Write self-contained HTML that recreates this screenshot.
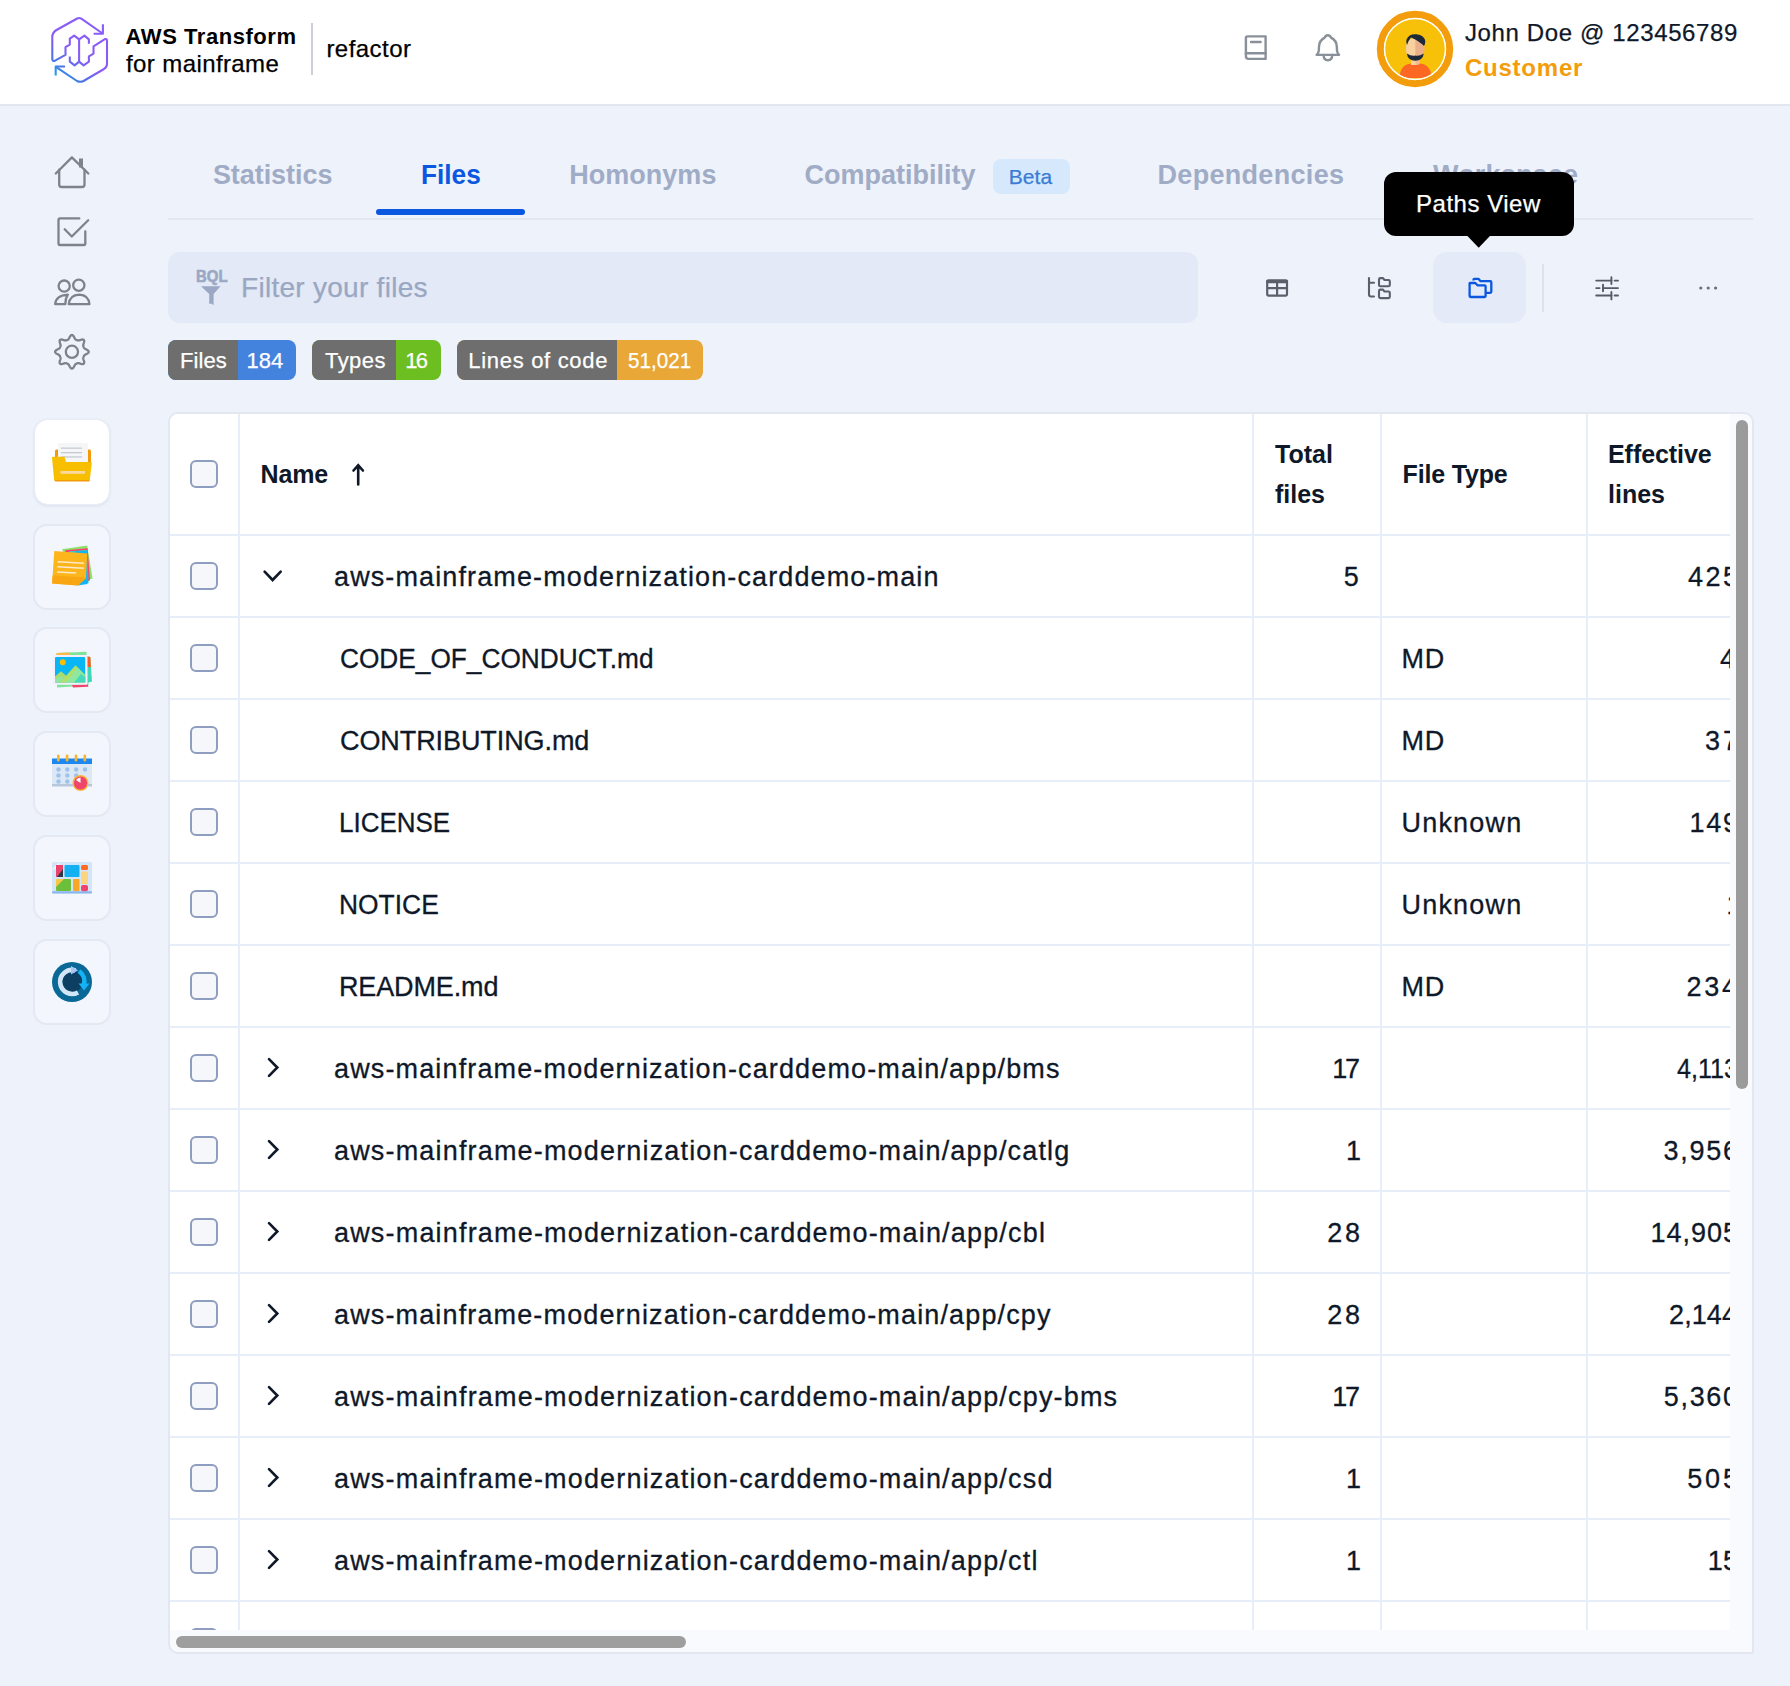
<!DOCTYPE html>
<html><head><meta charset="utf-8"><title>AWS Transform - Files</title>
<style>
html,body{margin:0;padding:0}
body{width:1790px;height:1686px;overflow:hidden;background:#eef2fb;font-family:"Liberation Sans",sans-serif;position:relative}
.a{position:absolute}
.t{position:absolute;white-space:pre}
svg{position:absolute;overflow:visible}
.card{position:absolute;left:32.5px;width:78.5px;height:86px;border-radius:14px;box-sizing:border-box;background:#f3f6fc;border:2px solid #e3e8f3}
.cb{position:absolute;left:190px;width:28px;height:28px;box-sizing:border-box;border:2px solid #8e9dc0;border-radius:6px;background:#f5f7fa}
.hl{position:absolute;left:0;width:1560px;height:2px;background:#e8eef9}
.vl{position:absolute;top:0;width:2px;height:1216px;background:#e8eef9}
</style></head><body>

<div class="a" style="left:0;top:0;width:1790px;height:104px;background:#fff"></div>
<div class="a" style="left:0;top:104px;width:1790px;height:2px;background:#e1e6f0"></div>
<svg style="left:0;top:0" width="120" height="100" viewBox="0 0 120 100">
<defs><linearGradient id="lg" x1="100" y1="20" x2="55" y2="80" gradientUnits="userSpaceOnUse">
<stop offset="0" stop-color="#8a5cf6"/><stop offset="0.55" stop-color="#8a5cf6"/><stop offset="0.8" stop-color="#4a74e6"/><stop offset="1" stop-color="#07b6f2"/></linearGradient></defs>
<g fill="none" stroke="url(#lg)" stroke-width="2.1" stroke-linejoin="round" stroke-linecap="butt">
<path d="M102.9 24.2 V33.7 H93.6"/>
<path d="M102.6 33.5 L81.3 18.6 Q79.3 17.4 77.2 18.5 L56.5 30 Q52.3 32.6 52.3 37 V59.2 Q52.6 61.6 55 60.7 L65.5 54.8 V47.2 L69.8 44.6 V38.6 L74.2 35.6 L79.1 39.4 L84.4 35.6 L88.9 39.4 V43.8"/>
<path d="M79.1 39.4 V61.6"/>
<path d="M69.8 56.6 V61.6 L74.6 65.4 L79.1 61.6 L83.6 65.4 L88.9 61.6 V56.4 L93.5 53.6 V46.4 L104.5 39.3 Q107 38.2 107 41 V64 Q107 67 104 69 L83.5 81 Q80 82.6 77 81 L56.6 67.4"/>
<path d="M65 66.5 H55.7 V75.5"/>
</g></svg>
<div class="a" style="left:310.5px;top:23px;width:2.4px;height:52px;background:#cdd0d6"></div>
<svg style="left:0;top:0" width="1790" height="1686"><g fill="none" stroke="#8a9099" stroke-width="2.4" stroke-linejoin="round" stroke-linecap="round">
<path d="M1247.5 36.4 H1265.6 V58.9 H1248.5 Q1245.9 58.9 1245.9 56.3 V38 Q1245.9 36.4 1247.5 36.4 Z"/>
<path d="M1245.9 53.2 H1265.6"/><path d="M1251 42 H1260.6"/></g></svg>
<svg style="left:0;top:0" width="1790" height="1686"><g fill="none" stroke="#8a9099" stroke-width="2.4" stroke-linejoin="round" stroke-linecap="round">
<path d="M1327.8 35.3 Q1330 35.3 1331 37.6 Q1336.6 40.4 1336.8 46.5 L1337 50.5 Q1337.2 53 1339 54.9 H1316.7 Q1318.7 53 1318.8 50.5 L1319 46.5 Q1319.3 40.4 1324.7 37.6 Q1325.7 35.3 1327.8 35.3 Z"/>
<path d="M1323.6 55 Q1323.6 60.2 1327.9 60.2 Q1332.2 60.2 1332.2 55"/></g></svg>
<svg style="left:0;top:0" width="1790" height="1686">
<defs><clipPath id="avc"><circle cx="1415" cy="49" r="29.8"/></clipPath></defs>
<circle cx="1415" cy="49" r="34.6" fill="none" stroke="#f39c0c" stroke-width="7.2"/>
<circle cx="1415" cy="49" r="31.2" fill="#fff"/>
<circle cx="1415" cy="49" r="29.8" fill="#f7c10a"/>
<g clip-path="url(#avc)">
<path d="M1399.5 78 Q1400 64.5 1411 63.5 H1420 Q1431 64.5 1431.5 78 Z" fill="#fd6724"/>
<rect x="1411" y="56" width="9" height="9" rx="3" fill="#f5b98f"/>
<rect x="1411" y="56" width="4.5" height="9" fill="#f9d19e"/>
<ellipse cx="1415.3" cy="48.5" rx="9.4" ry="10.5" fill="#eab08a"/>
<path d="M1415.3 38 Q1406 38 1405.9 48.5 Q1406 59 1415.3 59 Z" fill="#f9d19e"/>
<path d="M1406.5 39.5 Q1409 33.5 1416.5 34.2 Q1424.5 35 1425.3 41.5 Q1425.2 44.5 1424 46 Q1419 41 1411 37.5 Q1408 41 1407 45 Q1405.8 42 1406.5 39.5 Z" fill="#1d2838"/>
<path d="M1406.8 53.5 Q1407.8 60.5 1415.3 60.8 Q1422.8 60.5 1423.8 53.5 Q1419 56.5 1415.3 55.5 Q1411.6 56.5 1406.8 53.5 Z" fill="#1d2838"/>
</g></svg>
<svg style="left:0;top:0" width="1790" height="1686"><g fill="none" stroke="#7d828c" stroke-width="2.3" stroke-linejoin="round" stroke-linecap="round">
<path d="M55.8 173.5 L71.9 157.4 L88.3 173.5"/>
<path d="M59.2 169.7 V184.5 Q59.2 187 61.7 187 H82 Q84.5 187 84.5 184.5 V169.7"/>
</g><rect x="79" y="158.5" width="4" height="9" fill="#7d828c"/>
<g fill="none" stroke="#7d828c" stroke-width="2.3" stroke-linejoin="round" stroke-linecap="round">
<path d="M79.3 218.4 H60 Q58.5 218.4 58.5 220 V243.6 Q58.5 245 60 245 H84 Q85.3 245 85.3 243.6 V231.3"/>
<path d="M64.7 229.3 L71.8 236.5 L88.2 220.2"/>
<circle cx="64.2" cy="286.1" r="5.6"/><circle cx="78.8" cy="285.2" r="5.6"/>
<path d="M55.2 304.2 Q55.6 295.5 67.8 294.6 Q65.3 298.5 65.3 304.2 Z"/>
<path d="M68.8 304.2 Q69.6 295 79.3 294.6 Q88.6 295 89.4 304.2 Z"/>
<circle cx="71.9" cy="351.8" r="6.1"/>
</g>
<path id="gear" fill="none" stroke="#7d828c" stroke-width="2.3" stroke-linejoin="round" d="M71.90 335.00 L72.23 335.05 L72.55 335.18 L72.87 335.40 L73.17 335.69 L73.45 336.04 L73.72 336.44 L73.97 336.86 L74.20 337.29 L74.42 337.71 L74.62 338.11 L74.82 338.47 L75.02 338.80 L75.22 339.08 L75.42 339.31 L75.63 339.50 L75.85 339.65 L76.07 339.77 L76.30 339.88 L76.53 339.97 L76.76 340.07 L76.99 340.16 L77.22 340.26 L77.46 340.35 L77.70 340.42 L77.96 340.46 L78.24 340.48 L78.55 340.45 L78.89 340.40 L79.26 340.31 L79.66 340.19 L80.09 340.06 L80.54 339.91 L81.00 339.77 L81.48 339.65 L81.94 339.56 L82.39 339.51 L82.81 339.52 L83.19 339.59 L83.51 339.72 L83.78 339.92 L83.98 340.19 L84.11 340.51 L84.18 340.89 L84.19 341.31 L84.14 341.76 L84.05 342.22 L83.93 342.70 L83.79 343.16 L83.64 343.61 L83.51 344.04 L83.39 344.44 L83.30 344.81 L83.25 345.15 L83.22 345.46 L83.24 345.74 L83.28 346.00 L83.35 346.24 L83.44 346.48 L83.54 346.71 L83.63 346.94 L83.73 347.17 L83.82 347.40 L83.93 347.63 L84.05 347.85 L84.20 348.07 L84.39 348.28 L84.62 348.48 L84.90 348.68 L85.23 348.88 L85.59 349.08 L85.99 349.28 L86.41 349.50 L86.84 349.73 L87.26 349.98 L87.66 350.25 L88.01 350.53 L88.30 350.83 L88.52 351.15 L88.65 351.47 L88.70 351.80 L88.65 352.13 L88.52 352.45 L88.30 352.77 L88.01 353.07 L87.66 353.35 L87.26 353.62 L86.84 353.87 L86.41 354.10 L85.99 354.32 L85.59 354.52 L85.23 354.72 L84.90 354.92 L84.62 355.12 L84.39 355.32 L84.20 355.53 L84.05 355.75 L83.93 355.97 L83.82 356.20 L83.73 356.43 L83.63 356.66 L83.54 356.89 L83.44 357.12 L83.35 357.36 L83.28 357.60 L83.24 357.86 L83.22 358.14 L83.25 358.45 L83.30 358.79 L83.39 359.16 L83.51 359.56 L83.64 359.99 L83.79 360.44 L83.93 360.90 L84.05 361.38 L84.14 361.84 L84.19 362.29 L84.18 362.71 L84.11 363.09 L83.98 363.41 L83.78 363.68 L83.51 363.88 L83.19 364.01 L82.81 364.08 L82.39 364.09 L81.94 364.04 L81.48 363.95 L81.00 363.83 L80.54 363.69 L80.09 363.54 L79.66 363.41 L79.26 363.29 L78.89 363.20 L78.55 363.15 L78.24 363.12 L77.96 363.14 L77.70 363.18 L77.46 363.25 L77.22 363.34 L76.99 363.44 L76.76 363.53 L76.53 363.63 L76.30 363.72 L76.07 363.83 L75.85 363.95 L75.63 364.10 L75.42 364.29 L75.22 364.52 L75.02 364.80 L74.82 365.13 L74.62 365.49 L74.42 365.89 L74.20 366.31 L73.97 366.74 L73.72 367.16 L73.45 367.56 L73.17 367.91 L72.87 368.20 L72.55 368.42 L72.23 368.55 L71.90 368.60 L71.57 368.55 L71.25 368.42 L70.93 368.20 L70.63 367.91 L70.35 367.56 L70.08 367.16 L69.83 366.74 L69.60 366.31 L69.38 365.89 L69.18 365.49 L68.98 365.13 L68.78 364.80 L68.58 364.52 L68.38 364.29 L68.17 364.10 L67.95 363.95 L67.73 363.83 L67.50 363.72 L67.27 363.63 L67.04 363.53 L66.81 363.44 L66.58 363.34 L66.34 363.25 L66.10 363.18 L65.84 363.14 L65.56 363.12 L65.25 363.15 L64.91 363.20 L64.54 363.29 L64.14 363.41 L63.71 363.54 L63.26 363.69 L62.80 363.83 L62.32 363.95 L61.86 364.04 L61.41 364.09 L60.99 364.08 L60.61 364.01 L60.29 363.88 L60.02 363.68 L59.82 363.41 L59.69 363.09 L59.62 362.71 L59.61 362.29 L59.66 361.84 L59.75 361.38 L59.87 360.90 L60.01 360.44 L60.16 359.99 L60.29 359.56 L60.41 359.16 L60.50 358.79 L60.55 358.45 L60.58 358.14 L60.56 357.86 L60.52 357.60 L60.45 357.36 L60.36 357.12 L60.26 356.89 L60.17 356.66 L60.07 356.43 L59.98 356.20 L59.87 355.97 L59.75 355.75 L59.60 355.53 L59.41 355.32 L59.18 355.12 L58.90 354.92 L58.57 354.72 L58.21 354.52 L57.81 354.32 L57.39 354.10 L56.96 353.87 L56.54 353.62 L56.14 353.35 L55.79 353.07 L55.50 352.77 L55.28 352.45 L55.15 352.13 L55.10 351.80 L55.15 351.47 L55.28 351.15 L55.50 350.83 L55.79 350.53 L56.14 350.25 L56.54 349.98 L56.96 349.73 L57.39 349.50 L57.81 349.28 L58.21 349.08 L58.57 348.88 L58.90 348.68 L59.18 348.48 L59.41 348.28 L59.60 348.07 L59.75 347.85 L59.87 347.63 L59.98 347.40 L60.07 347.17 L60.17 346.94 L60.26 346.71 L60.36 346.48 L60.45 346.24 L60.52 346.00 L60.56 345.74 L60.58 345.46 L60.55 345.15 L60.50 344.81 L60.41 344.44 L60.29 344.04 L60.16 343.61 L60.01 343.16 L59.87 342.70 L59.75 342.22 L59.66 341.76 L59.61 341.31 L59.62 340.89 L59.69 340.51 L59.82 340.19 L60.02 339.92 L60.29 339.72 L60.61 339.59 L60.99 339.52 L61.41 339.51 L61.86 339.56 L62.32 339.65 L62.80 339.77 L63.26 339.91 L63.71 340.06 L64.14 340.19 L64.54 340.31 L64.91 340.40 L65.25 340.45 L65.56 340.48 L65.84 340.46 L66.10 340.42 L66.34 340.35 L66.58 340.26 L66.81 340.16 L67.04 340.07 L67.27 339.97 L67.50 339.88 L67.73 339.77 L67.95 339.65 L68.17 339.50 L68.38 339.31 L68.58 339.08 L68.78 338.80 L68.98 338.47 L69.18 338.11 L69.38 337.71 L69.60 337.29 L69.83 336.86 L70.08 336.44 L70.35 336.04 L70.63 335.69 L70.93 335.40 L71.25 335.18 L71.57 335.05 L71.90 335.00 Z"/>
</svg>
<div class="card" style="left:34px;top:419px;width:76px;height:86px;background:#fff;border:1px solid #e8ecf4;box-shadow:0 1px 3px rgba(170,182,210,0.3)"></div>
<div class="card" style="top:523.5px"></div>
<div class="card" style="top:627px"></div>
<div class="card" style="top:731px"></div>
<div class="card" style="top:835px"></div>
<div class="card" style="top:939px"></div>
<svg style="left:0;top:0" width="1790" height="1686">
<!-- folder -->
<rect x="55" y="449.5" width="36" height="20" rx="1.5" fill="#f49a0a"/>
<rect x="58" y="443" width="30" height="30" fill="#f4f6f8"/>
<rect x="61" y="447.5" width="21" height="1.3" fill="#c6cbd2"/><rect x="61" y="452" width="21" height="1.3" fill="#c6cbd2"/><rect x="61" y="456.3" width="21" height="1.3" fill="#c6cbd2"/>
<path d="M52 457.5 Q52 456.8 52.8 456.8 H64.5 L66 462 H91 Q92 462 91.8 463 L89.8 480 Q89.6 481 88.6 481 H55.2 Q54.2 481 54.1 480 Z" fill="#f7bf00"/>
<rect x="60.5" y="471" width="24.5" height="2.8" fill="#f9d9a0"/>
<rect x="55" y="480" width="34.5" height="1.5" fill="#f39a0a"/>
<!-- sticky notes -->
<path d="M62 549.2 L87.2 545.5 L92.5 578.5 L80 583 Z" fill="#8de06a"/>
<path d="M65 550.3 L87.6 548.2 L90 580.5 L78 583.5 Z" fill="#ff3d6e"/>
<path d="M69 551.3 L87 550 L88.6 583.2 L75 584.3 Z" fill="#2fd0c4"/>
<path d="M75 551.3 L87 550.8 L88 583.2 L76 584.2 Z" fill="#11b5f5"/>
<path d="M54.3 551 L87.3 553.5 L85.9 578.8 L78.1 585.5 L52.1 583.4 Z" fill="#fdb51c"/>
<path d="M52.6 575.5 L86.2 577.4 L85.9 578.8 L78.1 585.5 L52.1 583.4 Z" fill="#f9a613"/>
<path d="M85.9 578.8 L78.1 585.5 L87.3 584 Z" fill="#11b5f5"/>
<g fill="#fde9cc"><path d="M57.5 561 L84 562.5 V564 L57.5 562.6 Z"/><path d="M57.3 566 L83.8 567.5 V569 L57.3 567.6 Z"/><path d="M57.2 571.2 L76.2 572.3 V573.8 L57.2 572.8 Z"/></g>
<!-- images -->
<path d="M56.5 653 L86.5 651.8 L88.5 685.5 L57 687.6 Z" fill="#80e39a"/>
<path d="M56.5 653 L70 652.5 L70 655 L56.5 655.5 Z" fill="#ffb84a"/>
<path d="M85 656 L90.3 657 L92 681.5 L86 683.2 Z" fill="#3fd7b6"/>
<path d="M85 656 L90.3 657 L90.9 667 L85.6 667 Z" fill="#ff5a1f"/>
<path d="M72 685 L87.6 684 L88.4 686.8 L73 687.4 Z" fill="#f2456c"/>
<rect x="52.5" y="655" width="35" height="29.7" rx="0.8" fill="#f4effd"/>
<rect x="55" y="656.9" width="30.2" height="25.6" rx="1.2" fill="#08b6f5"/>
<circle cx="62.8" cy="662.3" r="3" fill="#fbbd08"/>
<path d="M55 676.5 L61 671.3 L66.5 676 L61 682.5 H55 Z" fill="#a9dc6c"/>
<path d="M55 679.5 L60 676 L64 679 L62 682.5 H55 Z" fill="#8fe6a2"/>
<path d="M60 682.5 L75.5 665.2 L85.2 675 V682.5 Z" fill="#b2de6a"/>
<path d="M66 682.5 L77.5 667.5 L85.2 675.5 V682.5 Z" fill="#8fe8a0"/>
<path d="M74 682.5 L81 674 L85.2 677 V682.5 Z" fill="#48d9bd"/>
<!-- calendar -->
<rect x="52" y="758.5" width="40" height="5.5" fill="#1d88f0"/>
<rect x="52" y="764" width="40" height="22" fill="#dde8f6"/>
<rect x="52" y="784" width="40" height="2.5" fill="#b8c8dc"/>
<g fill="#9ec3ea">
<circle cx="58.5" cy="769.5" r="2.2"/><circle cx="67.3" cy="769.5" r="2.2"/><circle cx="76.2" cy="769.5" r="2.2"/><circle cx="85" cy="769.5" r="2.2"/>
<circle cx="58.5" cy="775.5" r="2.2"/><circle cx="67.3" cy="775.5" r="2.2"/><circle cx="76.2" cy="775.5" r="2.2"/>
<circle cx="58.5" cy="781.5" r="2.2"/><circle cx="67.3" cy="781.5" r="2.2"/></g>
<g fill="#f7b52b"><rect x="57" y="754.5" width="2.6" height="7" rx="1.2"/><rect x="65.8" y="754.5" width="2.6" height="7" rx="1.2"/><rect x="74.7" y="754.5" width="2.6" height="7" rx="1.2"/><rect x="83.5" y="754.5" width="2.6" height="7" rx="1.2"/></g>
<circle cx="80.5" cy="783" r="8" fill="#f9b73a"/><circle cx="80.5" cy="783" r="6.6" fill="#f0456a"/>
<path d="M80.5 783 V777.5 A5.5 5.5 0 0 0 76 780 Z" fill="#fff"/>
<!-- dashboard -->
<rect x="52" y="862" width="40" height="31.6" rx="1.8" fill="#d3e5f8"/>
<rect x="52" y="891.2" width="40" height="2.4" rx="1" fill="#8ab7ec"/>
<path d="M52 869.5 L59.5 862 V869.5 Z" fill="#eef5fd"/>
<rect x="56" y="865" width="7" height="12" fill="#e9436a"/>
<path d="M63 869 V877 H57 Z" fill="#2f3646"/>
<rect x="64.5" y="865" width="15" height="12" rx="1" fill="#15b0f2"/>
<rect x="81" y="865" width="7" height="5" rx="1.5" fill="#ff6b22"/>
<rect x="81" y="871.5" width="7" height="12.5" rx="1.2" fill="#fcd67f"/>
<rect x="81" y="885" width="7" height="6.2" rx="1.8" fill="#f0456a"/>
<rect x="56" y="879" width="15" height="12" rx="1.2" fill="#6cbf3a"/>
<path d="M56 879 H64 L56 887 Z" fill="#f6c84a"/>
<rect x="73" y="879" width="6.5" height="12" rx="1" fill="#f9a826"/>
<!-- refresh -->
<circle cx="72" cy="982" r="20" fill="#0a6896"/>
<circle cx="72.5" cy="981.5" r="10.5" fill="#0c3f62"/>
<path d="M75.5 970.4 A12 12 0 1 0 78 992.4" fill="none" stroke="#d3e6f8" stroke-width="4.6"/>
<path d="M71 966 L78 970.3 L71 974.6 Z" fill="#a9c6f5"/>
<path d="M79 971.2 A12 12 0 0 1 83.8 984.5" fill="none" stroke="#12b4f5" stroke-width="4.6"/>
<path d="M78.5 983.5 L89.5 983.5 L84 990.5 Z" fill="#12b4f5"/>
</svg>
<div class="a" style="left:168px;top:217.5px;width:1585px;height:2px;background:#e2e6ee"></div>
<div class="a" style="left:375.7px;top:209px;width:149.5px;height:6px;border-radius:3px;background:#0b57e0"></div>
<div class="a" style="left:993px;top:158.7px;width:77px;height:35px;border-radius:8px;background:#d6e9fc"></div>
<div class="a" style="left:168px;top:252px;width:1030px;height:71px;border-radius:12px;background:#e3e9f6"></div>
<svg style="left:0;top:0" width="1790" height="1686"><path d="M201 286.3 H220.5 L213.6 294 V305.2 L211.6 303.8 L209.2 303.8 V294 Z" fill="#9aa8c4"/></svg>
<div class="a" style="left:1433px;top:251.6px;width:93px;height:71.4px;border-radius:14px;background:#e4eaf7"></div>
<div class="a" style="left:1542px;top:264px;width:2px;height:47.5px;background:#dce2ee"></div>
<svg style="left:0;top:0" width="1790" height="1686">
<g fill="none" stroke="#5a5f6b" stroke-width="2.2" stroke-linejoin="round">
<rect x="1267.2" y="280.5" width="19.8" height="15.2" rx="1.6"/>
<path d="M1267.2 288.2 H1287 M1277.1 283 V295.7"/>
</g><rect x="1266.1" y="279.4" width="22" height="3.8" rx="1.5" fill="#5a5f6b"/>
<g fill="none" stroke="#5a5f6b" stroke-width="2.1" stroke-linejoin="round" stroke-linecap="round">
<path d="M1369 278 V294.6 Q1369 296.5 1371 296.5 H1374"/><path d="M1369 282.8 H1374"/>
<path d="M1379 279.5 Q1379 278.1 1380.4 278.1 H1383 L1384.5 280 H1388.5 Q1389.8 280 1389.8 281.3 V285 Q1389.8 286.3 1388.5 286.3 H1380.4 Q1379 286.3 1379 285 Z"/>
<path d="M1379 291 Q1379 289.6 1380.4 289.6 H1383 L1384.5 291.5 H1388.5 Q1389.8 291.5 1389.8 292.8 V296.8 Q1389.8 298.1 1388.5 298.1 H1380.4 Q1379 298.1 1379 296.8 Z"/>
</g>
<g fill="none" stroke="#0b57e0" stroke-width="2.3" stroke-linejoin="round">
<path d="M1469.6 283.2 V296 Q1469.6 297 1470.6 297 H1484.6 Q1485.6 297 1485.6 296 V286.3 Q1485.6 285.3 1484.6 285.3 H1477.5 L1475.3 283 H1470.6 Q1469.6 283 1469.6 283.2 Z"/>
<path d="M1473.5 280.6 V279.8 Q1473.5 278.9 1474.4 278.9 H1478.6 L1480.6 281.2 H1490.3 Q1491.3 281.2 1491.3 282.2 V291.8 Q1491.3 292.8 1490.3 292.8 H1485.6"/>
</g>
<g stroke="#545a66" stroke-width="1.9" stroke-linecap="round">
<path d="M1596.2 280.6 H1611.4 M1614.6 280.6 H1618 M1596.2 288.1 H1599.6 M1603 288.1 H1618 M1596.2 295.5 H1611.4 M1614.6 295.5 H1618"/>
<path d="M1611.4 277.3 V284 M1603 284.6 V291.3 M1611.4 292 V299.4"/>
</g>
</svg>
<svg style="left:0;top:0" width="1790" height="1686"><g fill="#6a6f7a"><circle cx="1700.8" cy="288" r="1.6"/><circle cx="1708.2" cy="288" r="1.6"/><circle cx="1715.6" cy="288" r="1.6"/></g></svg>
<div class="a" style="left:167.8px;top:340px;width:128.0px;height:40px;border-radius:8px;overflow:hidden;background:#4382dd"><div class="a" style="left:0;top:0;width:70.29999999999998px;height:40px;background:#6e6e6e"></div></div>
<div class="a" style="left:312px;top:340px;width:129.10000000000002px;height:40px;border-radius:8px;overflow:hidden;background:#6dbe21"><div class="a" style="left:0;top:0;width:84px;height:40px;background:#6e6e6e"></div></div>
<div class="a" style="left:456.8px;top:340px;width:246.3px;height:40px;border-radius:8px;overflow:hidden;background:#e8a736"><div class="a" style="left:0;top:0;width:160.2px;height:40px;background:#6e6e6e"></div></div>
<div class="a" style="left:168px;top:412px;width:1586px;height:1242px;box-sizing:border-box;border:2px solid #e2e7f0;border-radius:10px 10px 2px 10px;background:#f9fafd"></div>
<div class="a" style="left:170px;top:414px;width:1560px;height:1216px;overflow:hidden;background:#fff;border-top-left-radius:8px">
<div class="hl" style="top:120px"></div>
<div class="hl" style="top:202px"></div>
<div class="hl" style="top:284px"></div>
<div class="hl" style="top:366px"></div>
<div class="hl" style="top:448px"></div>
<div class="hl" style="top:530px"></div>
<div class="hl" style="top:612px"></div>
<div class="hl" style="top:694px"></div>
<div class="hl" style="top:776px"></div>
<div class="hl" style="top:858px"></div>
<div class="hl" style="top:940px"></div>
<div class="hl" style="top:1022px"></div>
<div class="hl" style="top:1104px"></div>
<div class="hl" style="top:1186px"></div>
<div class="vl" style="left:68px"></div>
<div class="vl" style="left:1082px"></div>
<div class="vl" style="left:1210px"></div>
<div class="vl" style="left:1416px"></div>
<div class="a" style="left:1390px;top:121px;width:170px;height:1100px">
<div class="t" style="left:128px;top:29px;font-size:27px;line-height:27px;color:#0f1828;letter-spacing:2.48px;-webkit-text-stroke:0.3px #0f1828;">425</div>
<div class="t" style="left:160px;top:111px;font-size:27px;line-height:27px;color:#0f1828;letter-spacing:0px;-webkit-text-stroke:0.3px #0f1828;">4</div>
<div class="t" style="left:145px;top:193px;font-size:27px;line-height:27px;color:#0f1828;letter-spacing:2.98px;-webkit-text-stroke:0.3px #0f1828;">37</div>
<div class="t" style="left:129.4px;top:275px;font-size:27px;line-height:27px;color:#0f1828;letter-spacing:1.78px;-webkit-text-stroke:0.3px #0f1828;">149</div>
<div class="t" style="left:166.6px;top:357px;font-size:27px;line-height:27px;color:#0f1828;letter-spacing:0px;-webkit-text-stroke:0.3px #0f1828;">1</div>
<div class="t" style="left:126.5px;top:439px;font-size:27px;line-height:27px;color:#0f1828;letter-spacing:2.73px;-webkit-text-stroke:0.3px #0f1828;">234</div>
<div class="t" style="left:117px;top:521px;font-size:27px;line-height:27px;color:#0f1828;letter-spacing:0px;-webkit-text-stroke:0.3px #0f1828;transform:scaleX(0.9296);transform-origin:0 0;">4,113</div>
<div class="t" style="left:103.5px;top:603px;font-size:27px;line-height:27px;color:#0f1828;letter-spacing:1.74px;-webkit-text-stroke:0.3px #0f1828;">3,956</div>
<div class="t" style="left:90.4px;top:685px;font-size:27px;line-height:27px;color:#0f1828;letter-spacing:1.01px;-webkit-text-stroke:0.3px #0f1828;">14,905</div>
<div class="t" style="left:109px;top:767px;font-size:27px;line-height:27px;color:#0f1828;letter-spacing:0.11px;-webkit-text-stroke:0.3px #0f1828;">2,144</div>
<div class="t" style="left:103.8px;top:849px;font-size:27px;line-height:27px;color:#0f1828;letter-spacing:1.66px;-webkit-text-stroke:0.3px #0f1828;">5,360</div>
<div class="t" style="left:127.2px;top:931px;font-size:27px;line-height:27px;color:#0f1828;letter-spacing:2.88px;-webkit-text-stroke:0.3px #0f1828;">505</div>
<div class="t" style="left:147.8px;top:1013px;font-size:27px;line-height:27px;color:#0f1828;letter-spacing:0.18px;-webkit-text-stroke:0.3px #0f1828;">15</div>
</div>
</div>
<div class="cb" style="top:460px"></div>
<div class="cb" style="top:562px"></div>
<div class="cb" style="top:644px"></div>
<div class="cb" style="top:726px"></div>
<div class="cb" style="top:808px"></div>
<div class="cb" style="top:890px"></div>
<div class="cb" style="top:972px"></div>
<div class="cb" style="top:1054px"></div>
<div class="cb" style="top:1136px"></div>
<div class="cb" style="top:1218px"></div>
<div class="cb" style="top:1300px"></div>
<div class="cb" style="top:1382px"></div>
<div class="cb" style="top:1464px"></div>
<div class="cb" style="top:1546px"></div>
<div class="a" style="left:190px;top:1628px;width:28px;height:2px;overflow:hidden"><div class="cb" style="left:0;top:0"></div></div>
<svg style="left:0;top:0" width="1790" height="1686"><g fill="none" stroke="#0f1828" stroke-width="2.6" stroke-linecap="round" stroke-linejoin="miter"><path d="M264.6 571.6 L272.6 580 L280.7 571.6"/><path d="M269 1059.2 L277.3 1067.5 L269 1075.8"/><path d="M269 1141.2 L277.3 1149.5 L269 1157.8"/><path d="M269 1223.2 L277.3 1231.5 L269 1239.8"/><path d="M269 1305.2 L277.3 1313.5 L269 1321.8"/><path d="M269 1387.2 L277.3 1395.5 L269 1403.8"/><path d="M269 1469.2 L277.3 1477.5 L269 1485.8"/><path d="M269 1551.2 L277.3 1559.5 L269 1567.8"/><path d="M358.2 484.5 V465.5 M353.5 470.5 L358.2 465.3 L362.9 470.5"/></g></svg>
<div class="a" style="left:1736px;top:420px;width:12px;height:668.7px;border-radius:6px;background:#9b9b9b"></div>
<div class="a" style="left:176px;top:1636px;width:510px;height:12px;border-radius:6px;background:#9e9e9e"></div>
<div class="t" style="left:125.6px;top:25.9px;font-size:22px;line-height:22px;font-weight:bold;color:#000;letter-spacing:0.55px;">AWS Transform</div>
<div class="t" style="left:126px;top:52.3px;font-size:24px;line-height:24px;font-weight:normal;color:#000;letter-spacing:0.4px;-webkit-text-stroke:0.25px #000;">for mainframe</div>
<div class="t" style="left:326.4px;top:37px;font-size:24px;line-height:24px;font-weight:normal;color:#000;letter-spacing:0.46px;-webkit-text-stroke:0.25px #000;">refactor</div>
<div class="t" style="left:1465px;top:20.8px;font-size:24px;line-height:24px;font-weight:normal;color:#0f1828;letter-spacing:0.62px;-webkit-text-stroke:0.25px #0f1828;">John Doe @ 123456789</div>
<div class="t" style="left:1465px;top:55.9px;font-size:24px;line-height:24px;font-weight:bold;color:#f39c0c;letter-spacing:0.76px;">Customer</div>
<div class="t" style="left:212.9px;top:162.2px;font-size:27px;line-height:27px;font-weight:bold;color:#a0acc6;letter-spacing:-0.06px;">Statistics</div>
<div class="t" style="left:420.83px;top:162.2px;font-size:27px;line-height:27px;font-weight:bold;color:#0b57e0;letter-spacing:0px;transform:scaleX(0.9712);transform-origin:0 0;">Files</div>
<div class="t" style="left:569.2px;top:162.2px;font-size:27px;line-height:27px;font-weight:bold;color:#a0acc6;letter-spacing:0.03px;">Homonyms</div>
<div class="t" style="left:804.5px;top:162.2px;font-size:27px;line-height:27px;font-weight:bold;color:#a0acc6;letter-spacing:0px;">Compatibility</div>
<div class="t" style="left:1157.5px;top:162.2px;font-size:27px;line-height:27px;font-weight:bold;color:#a0acc6;letter-spacing:0.31px;">Dependencies</div>
<div class="t" style="left:1433px;top:162.2px;font-size:27px;line-height:27px;font-weight:bold;color:#a0acc6;letter-spacing:0.18px;">Workspace</div>
<div class="t" style="left:1008.7px;top:166.2px;font-size:21px;line-height:21px;font-weight:normal;color:#3a7bd5;letter-spacing:0.09px;-webkit-text-stroke:0.25px #3a7bd5;">Beta</div>
<div class="t" style="left:196.02px;top:268px;font-size:17px;line-height:17px;font-weight:bold;color:#9aa8c4;letter-spacing:0px;-webkit-text-stroke:0.6px #9aa8c4;transform:scaleX(0.8783);transform-origin:0 0;">BQL</div>
<div class="t" style="left:241px;top:274.3px;font-size:28px;line-height:28px;font-weight:normal;color:#9aa7c2;letter-spacing:0.28px;-webkit-text-stroke:0.25px #9aa7c2;">Filter your files</div>
<div class="t" style="left:180px;top:350px;font-size:22px;line-height:22px;font-weight:normal;color:#fff;letter-spacing:0.09px;-webkit-text-stroke:0.25px #fff;">Files</div>
<div class="t" style="left:246.5px;top:350px;font-size:22px;line-height:22px;font-weight:normal;color:#fff;letter-spacing:0.06px;-webkit-text-stroke:0.25px #fff;">184</div>
<div class="t" style="left:325px;top:350px;font-size:22px;line-height:22px;font-weight:normal;color:#fff;letter-spacing:0.45px;-webkit-text-stroke:0.25px #fff;">Types</div>
<div class="t" style="left:405.3px;top:350px;font-size:22px;line-height:22px;font-weight:normal;color:#fff;letter-spacing:-1.84px;-webkit-text-stroke:0.25px #fff;">16</div>
<div class="t" style="left:468.3px;top:350px;font-size:22px;line-height:22px;font-weight:normal;color:#fff;letter-spacing:0.69px;-webkit-text-stroke:0.25px #fff;">Lines of code</div>
<div class="t" style="left:627.7px;top:350px;font-size:22px;line-height:22px;font-weight:normal;color:#fff;letter-spacing:0px;transform:scaleX(0.9381);transform-origin:0 0;-webkit-text-stroke:0.25px #fff;">51,021</div>
<div class="t" style="left:260.6px;top:461.8px;font-size:25px;line-height:25px;font-weight:bold;color:#0f1828;letter-spacing:-0.16px;">Name</div>
<div class="t" style="left:1275px;top:441.8px;font-size:25px;line-height:25px;font-weight:bold;color:#0f1828;letter-spacing:0px;">Total</div>
<div class="t" style="left:1275px;top:481.5px;font-size:25px;line-height:25px;font-weight:bold;color:#0f1828;letter-spacing:0px;">files</div>
<div class="t" style="left:1402.6px;top:461.8px;font-size:25px;line-height:25px;font-weight:bold;color:#0f1828;letter-spacing:-0.18px;">File Type</div>
<div class="t" style="left:1608px;top:442px;font-size:25px;line-height:25px;font-weight:bold;color:#0f1828;letter-spacing:-0.06px;">Effective</div>
<div class="t" style="left:1608px;top:482px;font-size:25px;line-height:25px;font-weight:bold;color:#0f1828;letter-spacing:0px;">lines</div>
<div class="t" style="left:334px;top:564px;font-size:27px;line-height:27px;font-weight:normal;color:#0f1828;letter-spacing:1.12px;-webkit-text-stroke:0.3px #0f1828;">aws-mainframe-modernization-carddemo-main</div>
<div class="t" style="left:1343.8px;top:564px;font-size:27px;line-height:27px;font-weight:normal;color:#0f1828;letter-spacing:0px;-webkit-text-stroke:0.3px #0f1828;">5</div>
<div class="t" style="left:340.03px;top:646px;font-size:27px;line-height:27px;font-weight:normal;color:#0f1828;letter-spacing:0px;transform:scaleX(0.9719);transform-origin:0 0;-webkit-text-stroke:0.3px #0f1828;">CODE_OF_CONDUCT.md</div>
<div class="t" style="left:1401.5px;top:646px;font-size:27px;line-height:27px;font-weight:normal;color:#0f1828;letter-spacing:0.81px;-webkit-text-stroke:0.3px #0f1828;">MD</div>
<div class="t" style="left:340px;top:728px;font-size:27px;line-height:27px;font-weight:normal;color:#0f1828;letter-spacing:-0.08px;-webkit-text-stroke:0.3px #0f1828;">CONTRIBUTING.md</div>
<div class="t" style="left:1401.5px;top:728px;font-size:27px;line-height:27px;font-weight:normal;color:#0f1828;letter-spacing:0.81px;-webkit-text-stroke:0.3px #0f1828;">MD</div>
<div class="t" style="left:339.08px;top:810px;font-size:27px;line-height:27px;font-weight:normal;color:#0f1828;letter-spacing:0px;transform:scaleX(0.9624);transform-origin:0 0;-webkit-text-stroke:0.3px #0f1828;">LICENSE</div>
<div class="t" style="left:1401.5px;top:810px;font-size:27px;line-height:27px;font-weight:normal;color:#0f1828;letter-spacing:1.19px;-webkit-text-stroke:0.3px #0f1828;">Unknown</div>
<div class="t" style="left:339.04px;top:892px;font-size:27px;line-height:27px;font-weight:normal;color:#0f1828;letter-spacing:0px;transform:scaleX(0.9779);transform-origin:0 0;-webkit-text-stroke:0.3px #0f1828;">NOTICE</div>
<div class="t" style="left:1401.5px;top:892px;font-size:27px;line-height:27px;font-weight:normal;color:#0f1828;letter-spacing:1.19px;-webkit-text-stroke:0.3px #0f1828;">Unknown</div>
<div class="t" style="left:339px;top:974px;font-size:27px;line-height:27px;font-weight:normal;color:#0f1828;letter-spacing:-0.14px;-webkit-text-stroke:0.3px #0f1828;">README.md</div>
<div class="t" style="left:1401.5px;top:974px;font-size:27px;line-height:27px;font-weight:normal;color:#0f1828;letter-spacing:0.81px;-webkit-text-stroke:0.3px #0f1828;">MD</div>
<div class="t" style="left:334px;top:1056px;font-size:27px;line-height:27px;font-weight:normal;color:#0f1828;letter-spacing:1.14px;-webkit-text-stroke:0.3px #0f1828;">aws-mainframe-modernization-carddemo-main/app/bms</div>
<div class="t" style="left:1332.2px;top:1056px;font-size:27px;line-height:27px;font-weight:normal;color:#0f1828;letter-spacing:-2.22px;-webkit-text-stroke:0.3px #0f1828;">17</div>
<div class="t" style="left:334px;top:1138px;font-size:27px;line-height:27px;font-weight:normal;color:#0f1828;letter-spacing:1.17px;-webkit-text-stroke:0.3px #0f1828;">aws-mainframe-modernization-carddemo-main/app/catlg</div>
<div class="t" style="left:1346px;top:1138px;font-size:27px;line-height:27px;font-weight:normal;color:#0f1828;letter-spacing:0px;-webkit-text-stroke:0.3px #0f1828;">1</div>
<div class="t" style="left:334px;top:1220px;font-size:27px;line-height:27px;font-weight:normal;color:#0f1828;letter-spacing:1.18px;-webkit-text-stroke:0.3px #0f1828;">aws-mainframe-modernization-carddemo-main/app/cbl</div>
<div class="t" style="left:1327.2px;top:1220px;font-size:27px;line-height:27px;font-weight:normal;color:#0f1828;letter-spacing:2.78px;-webkit-text-stroke:0.3px #0f1828;">28</div>
<div class="t" style="left:334px;top:1302px;font-size:27px;line-height:27px;font-weight:normal;color:#0f1828;letter-spacing:1.14px;-webkit-text-stroke:0.3px #0f1828;">aws-mainframe-modernization-carddemo-main/app/cpy</div>
<div class="t" style="left:1327.2px;top:1302px;font-size:27px;line-height:27px;font-weight:normal;color:#0f1828;letter-spacing:2.78px;-webkit-text-stroke:0.3px #0f1828;">28</div>
<div class="t" style="left:334px;top:1384px;font-size:27px;line-height:27px;font-weight:normal;color:#0f1828;letter-spacing:1.18px;-webkit-text-stroke:0.3px #0f1828;">aws-mainframe-modernization-carddemo-main/app/cpy-bms</div>
<div class="t" style="left:1332.2px;top:1384px;font-size:27px;line-height:27px;font-weight:normal;color:#0f1828;letter-spacing:-2.22px;-webkit-text-stroke:0.3px #0f1828;">17</div>
<div class="t" style="left:334px;top:1466px;font-size:27px;line-height:27px;font-weight:normal;color:#0f1828;letter-spacing:1.18px;-webkit-text-stroke:0.3px #0f1828;">aws-mainframe-modernization-carddemo-main/app/csd</div>
<div class="t" style="left:1346px;top:1466px;font-size:27px;line-height:27px;font-weight:normal;color:#0f1828;letter-spacing:0px;-webkit-text-stroke:0.3px #0f1828;">1</div>
<div class="t" style="left:334px;top:1548px;font-size:27px;line-height:27px;font-weight:normal;color:#0f1828;letter-spacing:1.18px;-webkit-text-stroke:0.3px #0f1828;">aws-mainframe-modernization-carddemo-main/app/ctl</div>
<div class="t" style="left:1346px;top:1548px;font-size:27px;line-height:27px;font-weight:normal;color:#0f1828;letter-spacing:0px;-webkit-text-stroke:0.3px #0f1828;">1</div>
<div class="a" style="left:1384.2px;top:171.8px;width:190px;height:64.2px;border-radius:12px;background:#000"></div>
<svg style="left:0;top:0" width="1790" height="1686"><path d="M1466.5 235 L1478.7 247.7 L1490.9 235 Z" fill="#000"/></svg>
<div class="t" style="left:1416px;top:191.7px;font-size:24px;line-height:24px;font-weight:normal;color:#fff;letter-spacing:0.52px;-webkit-text-stroke:0.25px #fff;">Paths View</div>
</body></html>
